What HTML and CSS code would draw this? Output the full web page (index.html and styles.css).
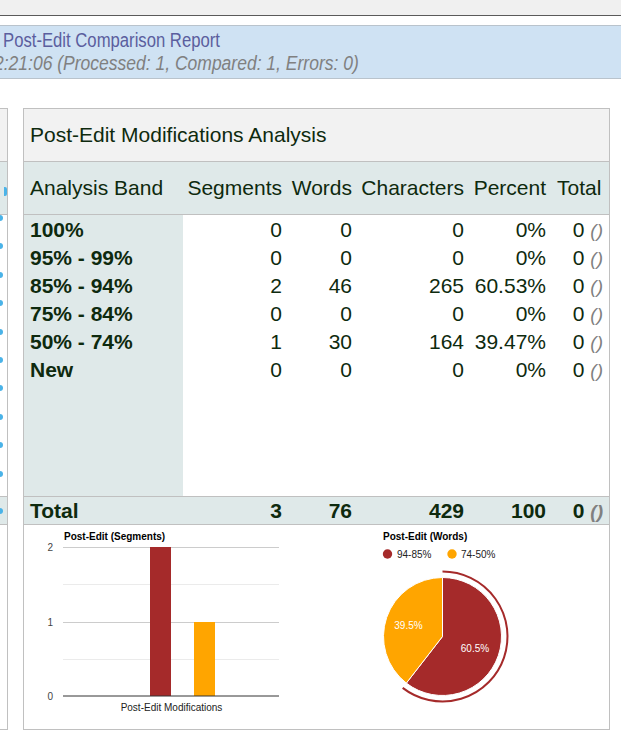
FILE: index.html
```html
<!DOCTYPE html>
<html>
<head>
<meta charset="utf-8">
<title>Post-Edit Comparison Report</title>
<link rel="stylesheet" href="styles.css">
</head>
<body>
<div class="topbar"></div>
<div class="banner">
  <div class="banner-line"><span class="banner-title">Post-Edit Comparison Report</span></div>
  <div class="banner-line"><span class="banner-sub">2:21:06 (Processed: 1, Compared: 1, Errors: 0)</span></div>
</div>
<div class="panels">
  <div class="side">
    <div class="side-title"></div>
    <div class="side-head"><span class="side-link"></span></div>
    <div class="side-body">
      <span class="dot"></span><span class="dot"></span><span class="dot"></span><span class="dot"></span><span class="dot"></span>
      <span class="dot"></span><span class="dot"></span><span class="dot"></span><span class="dot"></span><span class="dot"></span>
    </div>
    <div class="side-total"><span class="dot"></span></div>
    <div class="side-chart"></div>
  </div>
  <div class="report">
    <div class="r-title">Post-Edit Modifications Analysis</div>
    <div class="r-row r-head">
      <div class="c c1">Analysis Band</div>
      <div class="c">Segments</div>
      <div class="c">Words</div>
      <div class="c">Characters</div>
      <div class="c">Percent</div>
      <div class="c cl">Total</div>
    </div>
    <div class="r-body">
      <div class="r-row">
        <div class="c c1 band">100%</div><div class="c">0</div><div class="c">0</div><div class="c">0</div><div class="c">0%</div><div class="c cl">0 <i class="paren">()</i></div>
      </div>
      <div class="r-row">
        <div class="c c1 band">95% - 99%</div><div class="c">0</div><div class="c">0</div><div class="c">0</div><div class="c">0%</div><div class="c cl">0 <i class="paren">()</i></div>
      </div>
      <div class="r-row">
        <div class="c c1 band">85% - 94%</div><div class="c">2</div><div class="c">46</div><div class="c">265</div><div class="c">60.53%</div><div class="c cl">0 <i class="paren">()</i></div>
      </div>
      <div class="r-row">
        <div class="c c1 band">75% - 84%</div><div class="c">0</div><div class="c">0</div><div class="c">0</div><div class="c">0%</div><div class="c cl">0 <i class="paren">()</i></div>
      </div>
      <div class="r-row">
        <div class="c c1 band">50% - 74%</div><div class="c">1</div><div class="c">30</div><div class="c">164</div><div class="c">39.47%</div><div class="c cl">0 <i class="paren">()</i></div>
      </div>
      <div class="r-row">
        <div class="c c1 band">New</div><div class="c">0</div><div class="c">0</div><div class="c">0</div><div class="c">0%</div><div class="c cl">0 <i class="paren">()</i></div>
      </div>
    </div>
    <div class="r-row r-total">
      <div class="c c1">Total</div><div class="c">3</div><div class="c">76</div><div class="c">429</div><div class="c">100</div><div class="c cl">0 <i class="paren">()</i></div>
    </div>
    <div class="r-charts">
      <svg class="charts" width="585" height="204" viewBox="0 0 585 204" xmlns="http://www.w3.org/2000/svg">
        <g class="bar-chart">
          <text x="40" y="15" class="ch-title">Post-Edit (Segments)</text>
          <line x1="39" y1="22.5" x2="255" y2="22.5" stroke="#cccccc"/>
          <line x1="39" y1="59.5" x2="255" y2="59.5" stroke="#ebebeb"/>
          <line x1="39" y1="97.5" x2="255" y2="97.5" stroke="#cccccc"/>
          <line x1="39" y1="134.5" x2="255" y2="134.5" stroke="#ebebeb"/>
          <rect x="126" y="22" width="21" height="149" fill="#a52a2a"/>
          <rect x="170" y="97" width="21" height="74" fill="#ffa500"/>
          <line x1="39" y1="171" x2="255" y2="171" stroke="#333333"/>
          <text x="29" y="26" class="ax" text-anchor="end">2</text>
          <text x="29" y="101" class="ax" text-anchor="end">1</text>
          <text x="29" y="175" class="ax" text-anchor="end">0</text>
          <text x="147.5" y="186" class="lbl" text-anchor="middle">Post-Edit Modifications</text>
        </g>
        <g class="pie-chart">
          <text x="359" y="15" class="ch-title">Post-Edit (Words)</text>
          <circle cx="363.5" cy="29" r="4.7" fill="#a52a2a"/>
          <text x="373" y="32.5" class="lbl">94-85%</text>
          <circle cx="428" cy="29" r="4.7" fill="#ffa500"/>
          <text x="437" y="32.5" class="lbl">74-50%</text>
          <path d="M418.5,111.5 L418.5,52.5 A59,59 0 1 1 382.34,158.12 Z" fill="#a52a2a" stroke="#ffffff" stroke-width="1"/>
          <path d="M418.5,111.5 L382.34,158.12 A59,59 0 0 1 418.5,52.5 Z" fill="#ffa500" stroke="#ffffff" stroke-width="1"/>
          <path d="M418.5,46.5 A65,65 0 1 1 378.66,162.86" fill="none" stroke="#a52a2a" stroke-width="2"/>
          <text x="384.5" y="104" class="pie-lbl" text-anchor="middle">39.5%</text>
          <text x="451" y="126.5" class="pie-lbl" text-anchor="middle">60.5%</text>
        </g>
      </svg>
    </div>
  </div>
</div>
</body>
</html>
```

FILE: styles.css
```css
html, body {
  margin: 0;
  padding: 0;
  background: #ffffff;
  overflow: hidden;
}
body {
  font-family: "Liberation Sans", Arial, sans-serif;
  color: #0e2a0e;
}
.topbar {
  height: 15px;
  background: #f0f0f0;
  border-bottom: 1px solid #5a5a5a;
}
.banner {
  margin-top: 9px;
  background: #cfe2f3;
  border-top: 1px solid #b9c3cc;
  border-bottom: 1px solid #b9c3cc;
  padding: 3px 0 3px 3px;
  font-size: 20px;
  line-height: 23px;
  white-space: nowrap;
  overflow: hidden;
}
.banner-line {
  height: 23px;
}
.banner-title {
  display: inline-block;
  color: #5b5e9e;
  transform: scaleX(0.834);
  transform-origin: 0 50%;
}
.banner-sub {
  display: inline-block;
  color: #808080;
  font-style: italic;
  margin-left: -9px;
  transform: scaleX(0.875);
  transform-origin: 0 50%;
}
.panels {
  display: flex;
  gap: 15px;
  margin-top: 29px;
}
.side {
  flex: none;
  width: 198px;
  margin-left: -192px;
  border: 1px solid #c0c0c0;
  display: flex;
  flex-direction: column;
}
.side-title {
  height: 52px;
  background: #f2f2f2;
  border-bottom: 1px solid #c0c0c0;
}
.side-head {
  height: 52px;
  background: #dfe9e9;
  border-bottom: 1px solid #c0c0c0;
  display: flex;
  justify-content: flex-end;
  align-items: center;
}
.side-link {
  width: 3px;
  height: 9px;
  margin-top: 6px;
  background: #4ab3e8;
  border-radius: 0 2px 2px 0;
}
.side-body {
  height: 282px;
  display: flex;
  flex-direction: column;
  align-items: flex-end;
  gap: 22.4px;
  padding-right: 4px;
  box-sizing: border-box;
  border-bottom: 1px solid #c0c0c0;
}
.dot {
  display: block;
  width: 6px;
  height: 6px;
  border-radius: 50%;
  background: #4ab3e8;
  flex: none;
}
.side-total {
  height: 27px;
  background: #dfe9e9;
  border-bottom: 1px solid #c0c0c0;
  display: flex;
  justify-content: flex-end;
  align-items: center;
  padding-right: 4px;
}
.side-chart {
  height: 204px;
}
.report {
  flex: none;
  width: 585px;
  border: 1px solid #c0c0c0;
}
.r-title {
  height: 52px;
  line-height: 52px;
  background: #f2f2f2;
  border-bottom: 1px solid #c0c0c0;
  padding-left: 6px;
  font-size: 21px;
}
.r-row {
  display: grid;
  grid-template-columns: 159px 104px 70px 112px 82px 58px;
  grid-auto-rows: 28px;
  font-size: 21px;
  line-height: 28px;
}
.c {
  text-align: right;
  padding-right: 5px;
  white-space: nowrap;
}
.c1 {
  text-align: left;
  padding-left: 6px;
}
.cl {
  padding-right: 6px;
}
.r-head {
  height: 52px;
  grid-auto-rows: 52px;
  line-height: 52px;
  background: #dfe9e9;
  border-bottom: 1px solid #c0c0c0;
}
.r-head .cl {
  text-align: left;
  padding-left: 6px;
}
.r-body {
  height: 282px;
  box-sizing: border-box;
  padding-top: 1px;
  background: linear-gradient(to right, #dfe9e9 159px, #ffffff 159px);
  border-bottom: 1px solid #c0c0c0;
}
.band {
  font-weight: bold;
}
.paren {
  font-size: 19px;
  line-height: 0;
  color: #808080;
}
.r-total {
  height: 27px;
  grid-auto-rows: 27px;
  line-height: 27px;
  background: #dfe9e9;
  border-bottom: 1px solid #c0c0c0;
  font-weight: bold;
}
.r-charts {
  height: 204px;
}
.charts {
  display: block;
  font-family: "Liberation Sans", Arial, sans-serif;
}
.ch-title {
  font-size: 10px;
  font-weight: bold;
  fill: #000000;
}
.ax {
  font-size: 10px;
  fill: #444444;
}
.lbl {
  font-size: 10px;
  fill: #222222;
}
.pie-lbl {
  font-size: 10px;
  fill: #ffffff;
}
```
